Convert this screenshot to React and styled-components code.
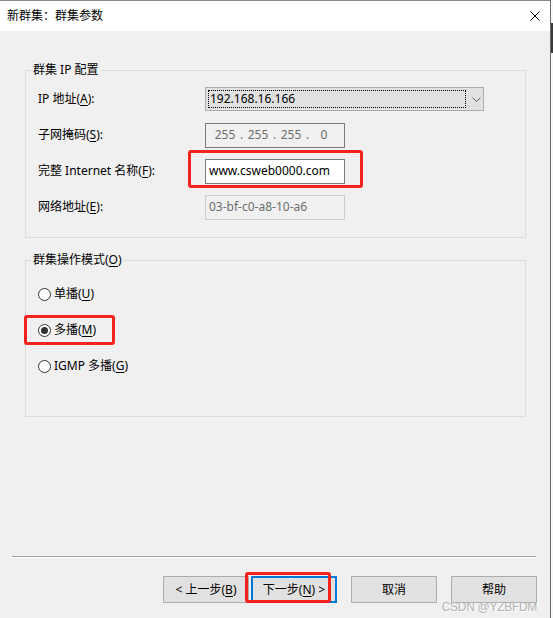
import React from "react";
import styled, { createGlobalStyle } from "styled-components";

const GlobalStyle = createGlobalStyle`
  html, body {
    margin: 0;
    padding: 0;
    background: #ffffff;
  }
  body {
    font-family: "Noto Sans", "Noto Sans CJK SC", sans-serif;
    font-size: 12px;
    color: #000;
  }
  *, *::before, *::after {
    box-sizing: border-box;
  }
`;

const Screen = styled.div`
  display: flex;
  width: 553px;
  height: 618px;
  overflow: hidden;
`;

const Dialog = styled.div`
  position: relative;
  width: 550px;
  height: 618px;
  display: flex;
  flex-direction: column;
  background: #f0f0f0;
  border-top: 1px solid #8a8a8a;
`;

const Behind = styled.div`
  width: 3px;
  display: flex;
  flex-direction: column;
  border-left: 1px solid #6b6b6b;
  background: #f7f7f7;
`;

const BehindThumb = styled.div`
  margin-top: 23px;
  height: 30px;
  background: #3a3a3a;
`;

const TitleBar = styled.div`
  height: 30px;
  display: flex;
  align-items: center;
  justify-content: space-between;
  padding: 0 10px 0 7px;
  background: #ffffff;
  line-height: 16px;
`;

const Body = styled.div`
  flex: 1;
  display: flex;
  flex-direction: column;
`;

const Content = styled.div`
  padding: 31px 24px 0 25px;
`;

const Group = styled.fieldset`
  margin: ${(p) => p.$top || 0}px 0 0;
  padding: ${(p) => p.$pad};
  border: 1px solid #dcdcdc;
  min-width: 0;
`;

const Legend = styled.legend`
  margin-left: -7px;
  padding: 0 2px;
  line-height: 16px;
  font-size: 12px;
`;

const Accel = styled.span`
  text-decoration: underline;
  text-underline-offset: 2px;
`;

const FormRow = styled.div`
  display: grid;
  grid-template-columns: 167px 1fr;
  align-items: center;
  height: 36px;
  line-height: 16px;
`;

const Combo = styled.div`
  width: 279px;
  height: 24px;
  display: flex;
  align-items: center;
  padding: 2px;
  background: #e1e1e1;
  border: 1px solid #adadad;
`;

const ComboValue = styled.div`
  flex: 0 0 258px;
  height: 18px;
  padding-left: 1px;
  border: 1px dotted #000;
  line-height: 16px;
`;

const Chevron = styled.svg`
  margin-left: 6px;
`;

const Field = styled.div`
  width: 140px;
  height: 25px;
  display: flex;
  align-items: center;
  padding-left: 3px;
  line-height: 16px;
  background: ${(p) => (p.$editable ? "#ffffff" : "#f0f0f0")};
  border: 1px solid ${(p) => (p.$soft ? "#cccccc" : "#7a7a7a")};
  color: ${(p) => (p.$editable ? "#000" : "#6d6d6d")};
`;

const IpField = styled(Field)`
  padding-left: 6px;
`;

const Octet = styled.span`
  width: 26px;
  text-align: center;
`;

const Dot = styled.span`
  width: 7px;
  text-align: center;
`;

const Marked = styled.div`
  position: relative;
  display: inline-flex;
  &::after {
    content: "";
    position: absolute;
    top: ${(p) => p.$box.top}px;
    left: ${(p) => p.$box.left}px;
    width: ${(p) => p.$box.width}px;
    height: ${(p) => p.$box.height}px;
    border: 3px solid #f5231d;
    border-radius: 3px;
    pointer-events: none;
  }
`;

const RadioRow = styled.div`
  height: 36px;
  display: flex;
  align-items: center;
  line-height: 16px;
`;

const RadioOption = styled.div`
  display: inline-flex;
  align-items: center;
  gap: 3px;
`;

const RadioCircle = styled.span`
  width: 13px;
  height: 13px;
  display: flex;
  align-items: center;
  justify-content: center;
  border: 1px solid #333;
  border-radius: 50%;
  background: #fff;
  &::after {
    content: "";
    width: 7px;
    height: 7px;
    border-radius: 50%;
    background: ${(p) => (p.$checked ? "#333" : "transparent")};
  }
`;

const Footer = styled.div`
  margin-top: auto;
  padding-bottom: 15px;
`;

const Separator = styled.div`
  height: 2px;
  margin: 0 14px 0 12px;
  border-top: 1px solid #a0a0a0;
  border-bottom: 1px solid #ffffff;
`;

const ButtonRow = styled.div`
  display: flex;
  justify-content: flex-end;
  gap: 14px;
  margin-top: 18px;
  padding-right: 13px;
`;

const NavPair = styled.div`
  display: flex;
  gap: 2px;
`;

const Button = styled.button`
  width: 86px;
  height: 27px;
  padding: 0;
  font-family: inherit;
  font-size: 12px;
  line-height: 16px;
  color: #000;
  background: #e1e1e1;
  border: ${(p) => (p.$default ? "2px solid #0078d7" : "1px solid #adadad")};
`;

const Watermark = styled.div`
  position: absolute;
  right: 13px;
  bottom: 4px;
  font-family: "Liberation Sans", sans-serif;
  font-size: 12px;
  letter-spacing: -0.3px;
  color: #b4b4b4;
  text-shadow: 1px 1px 0 rgba(255, 255, 255, 0.7);
  white-space: pre;
`;

function RadioItem({ checked, children }) {
  return (
    <RadioOption>
      <RadioCircle $checked={checked} />
      <span>{children}</span>
    </RadioOption>
  );
}

export default function App() {
  return (
    <>
      <GlobalStyle />
      <Screen>
        <Dialog>
          <TitleBar>
            <span>新群集：群集参数</span>
            <svg width="10" height="10" viewBox="0 0 10 10">
              <path d="M0.5 0.5 L9.5 9.5 M9.5 0.5 L0.5 9.5" stroke="#000" strokeWidth="1" fill="none" />
            </svg>
          </TitleBar>
          <Body>
            <Content>
              <Group $pad="3px 12px 12px 12px">
                <Legend>群集 IP 配置</Legend>
                <FormRow>
                  <span>
                    IP 地址(<Accel>A</Accel>):
                  </span>
                  <Combo>
                    <ComboValue>192.168.16.166</ComboValue>
                    <Chevron width="9" height="5" viewBox="0 0 9 5">
                      <path d="M0.5 0.5 L4.5 4.5 L8.5 0.5" stroke="#606060" strokeWidth="1" fill="none" />
                    </Chevron>
                  </Combo>
                </FormRow>
                <FormRow>
                  <span>
                    子网掩码(<Accel>S</Accel>):
                  </span>
                  <IpField>
                    <Octet>255</Octet>
                    <Dot>.</Dot>
                    <Octet>255</Octet>
                    <Dot>.</Dot>
                    <Octet>255</Octet>
                    <Dot>.</Dot>
                    <Octet>0</Octet>
                  </IpField>
                </FormRow>
                <FormRow>
                  <span>
                    完整 Internet 名称(<Accel>F</Accel>):
                  </span>
                  <div>
                    <Marked $box={{ top: -9, left: -17, width: 175, height: 38 }}>
                      <Field $editable>www.csweb0000.com</Field>
                    </Marked>
                  </div>
                </FormRow>
                <FormRow>
                  <span>
                    网络地址(<Accel>E</Accel>):
                  </span>
                  <Field $soft>03-bf-c0-a8-10-a6</Field>
                </FormRow>
              </Group>

              <Group $top={14} $pad="8px 12px 32px 12px">
                <Legend>
                  群集操作模式(<Accel>O</Accel>)
                </Legend>
                <RadioRow>
                  <RadioItem>
                    单播(<Accel>U</Accel>)
                  </RadioItem>
                </RadioRow>
                <RadioRow>
                  <Marked $box={{ top: -7, left: -14, width: 91, height: 30 }}>
                    <RadioItem checked>
                      多播(<Accel>M</Accel>)
                    </RadioItem>
                  </Marked>
                </RadioRow>
                <RadioRow>
                  <RadioItem>
                    IGMP 多播(<Accel>G</Accel>)
                  </RadioItem>
                </RadioRow>
              </Group>
            </Content>

            <Footer>
              <Separator />
              <ButtonRow>
                <NavPair>
                  <Button>
                    &lt; 上一步(<Accel>B</Accel>)
                  </Button>
                  <Marked $box={{ top: -4, left: -6, width: 86, height: 31 }}>
                    <Button $default>
                      下一步(<Accel>N</Accel>) &gt;
                    </Button>
                  </Marked>
                </NavPair>
                <Button>取消</Button>
                <Button>帮助</Button>
              </ButtonRow>
            </Footer>
          </Body>
          <Watermark>CSDN @YZBFDM</Watermark>
        </Dialog>
        <Behind>
          <BehindThumb />
        </Behind>
      </Screen>
    </>
  );
}
